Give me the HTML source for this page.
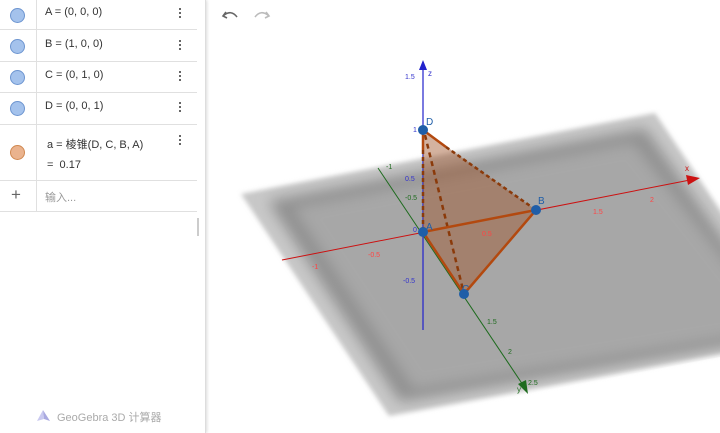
<!DOCTYPE html>
<html><head><meta charset="utf-8"><style>
body{margin:0;width:720px;height:433px;overflow:hidden;background:#fff;font-family:"Liberation Sans","Noto Sans CJK SC",sans-serif;position:relative}
.panel{position:absolute;left:0;top:0;width:205px;height:433px;background:#fff;border-right:1px solid #ddd;box-shadow:1px 0 3px rgba(0,0,0,.15)}
.row{position:absolute;left:0;width:197px;border-bottom:1px solid #e0e0e0}
.row .v{position:absolute;left:36px;top:0;bottom:0;border-left:1px solid #e0e0e0}
.dot{position:absolute;left:10px;width:13px;height:13px;border-radius:50%;background:#a4c2ec;border:1px solid #6d95d0}
.t{position:absolute;left:45px;font-size:11px;color:#333}
.m{position:absolute;left:179px;width:3px;font-size:11px;color:#555;line-height:4px}
.m i{display:block;width:2px;height:2px;background:#666;margin:0 0 2px}
</style></head><body>
<svg width="720" height="433" style="position:absolute;left:0;top:0;overflow:hidden">
<defs>
<filter id="b" x="-20%" y="-20%" width="140%" height="140%"><feGaussianBlur stdDeviation="7"/></filter>
<filter id="s" x="-10%" y="-10%" width="120%" height="120%"><feGaussianBlur stdDeviation="2.5"/></filter>
<clipPath id="pl"><polygon points="237,193 657,110 810,340 387,420"/></clipPath>
</defs>
<polygon points="241,194 655,113 806,338 389,416" fill="#c8c8c8" filter="url(#s)"/>
<g clip-path="url(#pl)">
<polygon points="268,201 645,128 790,335 400,402" fill="#909090" filter="url(#b)"/>
<polygon points="292,207 633,142 780,330 414,390" fill="#a7a7a7" filter="url(#b)"/>
</g>
<line x1="282" y1="260" x2="690" y2="180" stroke="#cc1111" stroke-width="1"/>
<polygon points="700,178 686,175 688,185" fill="#cc1111"/>
<line x1="378" y1="168" x2="525" y2="388" stroke="#1e6b1e" stroke-width="1"/>
<polygon points="528,394 518,384 526,380" fill="#1e6b1e"/>
<line x1="423" y1="330" x2="423" y2="66" stroke="#2222cc" stroke-width="1.2"/>
<polygon points="423,60 419,70 427,70" fill="#2222cc"/>
<polygon points="423,130 536,210 464,294 423,232" fill="#a0552a" opacity=".45"/>
<g stroke="#8b3a0a" stroke-width="2.5" fill="none">
<line x1="446" y1="147" x2="536" y2="210" stroke-dasharray="4,3"/>
<line x1="423" y1="150" x2="423" y2="232" stroke-dasharray="4,3"/>
<line x1="425" y1="135" x2="464" y2="294" stroke-dasharray="5,4"/>
<polyline points="423,232 536,210 464,294 423,232" stroke="#b3490f"/>
<line x1="423" y1="130" x2="446" y2="147" stroke="#b3490f"/>
<line x1="423" y1="130" x2="423" y2="150" stroke="#b3490f"/>
</g>
<g fill="#1f5ea8"><circle cx="423" cy="232" r="5"/><circle cx="536" cy="210" r="5"/><circle cx="464" cy="294" r="5"/><circle cx="423" cy="130" r="5"/></g>
<g font-size="9" font-family="Liberation Sans">
<text x="426" y="125" fill="#1f5ea8" font-size="10">D</text><text x="538" y="204" fill="#1f5ea8" font-size="10">B</text>
<text x="426" y="230" fill="#1f5ea8" font-size="10">A</text><text x="462" y="292" fill="#1f5ea8" font-size="10">C</text>
<text x="405" y="79" fill="#3333cc" font-size="7">1.5</text><text x="428" y="76" fill="#3333cc" font-size="8">z</text>
<text x="413" y="132" fill="#3333cc" font-size="7">1</text><text x="405" y="181" fill="#3333cc" font-size="7">0.5</text>
<text x="403" y="283" fill="#3333cc" font-size="7">-0.5</text><text x="413" y="232" fill="#3333cc" font-size="7">0</text>
<text x="685" y="171" fill="#cc1111" font-size="8">x</text><text x="482" y="236" fill="#ff4444" font-size="7">0.5</text>
<text x="593" y="214" fill="#ff4444" font-size="7">1.5</text><text x="650" y="202" fill="#ff4444" font-size="7">2</text>
<text x="368" y="257" fill="#ff4444" font-size="7">-0.5</text><text x="312" y="269" fill="#ff4444" font-size="7">-1</text>
<text x="386" y="169" fill="#1e6b1e" font-size="7">-1</text><text x="405" y="200" fill="#1e6b1e" font-size="7">-0.5</text>
<text x="487" y="324" fill="#1e6b1e" font-size="7">1.5</text><text x="508" y="354" fill="#1e6b1e" font-size="7">2</text>
<text x="528" y="385" fill="#1e6b1e" font-size="7">2.5</text><text x="517" y="392" fill="#1e6b1e" font-size="8">y</text>
</g>
<path d="M226 12 l-3 4 l4 2 M223 16 q8 -7 14 1" stroke="#666" stroke-width="1.6" fill="none"/>
<path d="M266 12 l3 4 l-4 2 M269 16 q-8 -7 -14 1" stroke="#bbb" stroke-width="1.6" fill="none"/>
</svg>
<div class="panel">
<div class="row" style="top:-1px;height:30px"><div class="v"></div><div class="dot" style="top:9px"></div><div class="t" style="top:7px">A = (0, 0, 0)</div><div class="m" style="top:9px"><i></i><i></i><i></i></div></div>
<div class="row" style="top:30px;height:31px"><div class="v"></div><div class="dot" style="top:9px"></div><div class="t" style="top:8px">B = (1, 0, 0)</div><div class="m" style="top:10px"><i></i><i></i><i></i></div></div>
<div class="row" style="top:62px;height:30px"><div class="v"></div><div class="dot" style="top:8px"></div><div class="t" style="top:7px">C = (0, 1, 0)</div><div class="m" style="top:9px"><i></i><i></i><i></i></div></div>
<div class="row" style="top:93px;height:31px"><div class="v"></div><div class="dot" style="top:8px"></div><div class="t" style="top:7px">D = (0, 0, 1)</div><div class="m" style="top:9px"><i></i><i></i><i></i></div></div>
<div class="row" style="top:125px;height:55px"><div class="v"></div><div class="dot" style="top:20px;background:#eab38e;border-color:#d08850"></div><div class="t" style="top:11px;left:47px">a = 棱锥(D, C, B, A)</div><div class="t" style="top:34px;left:47px">= &nbsp;0.17</div><div class="m" style="top:10px"><i></i><i></i><i></i></div></div>
<div class="row" style="top:181px;height:30px"><div class="v"></div><div style="position:absolute;left:11px;top:4px;font-size:17px;color:#666">+</div><div class="t" style="top:8px;color:#999">输入...</div></div>
<div style="position:absolute;left:197px;top:218px;width:2px;height:18px;background:#ccc"></div>
<svg width="16" height="14" style="position:absolute;left:36px;top:409px"><polygon points="7,1 1,12 8,10" fill="#c9c9f0"/><polygon points="7,1 8,10 14,12" fill="#a9a9e0"/></svg>
<div style="position:absolute;left:57px;top:409px;font-size:11px;color:#aaa">GeoGebra 3D 计算器</div>
</div>
</body></html>
